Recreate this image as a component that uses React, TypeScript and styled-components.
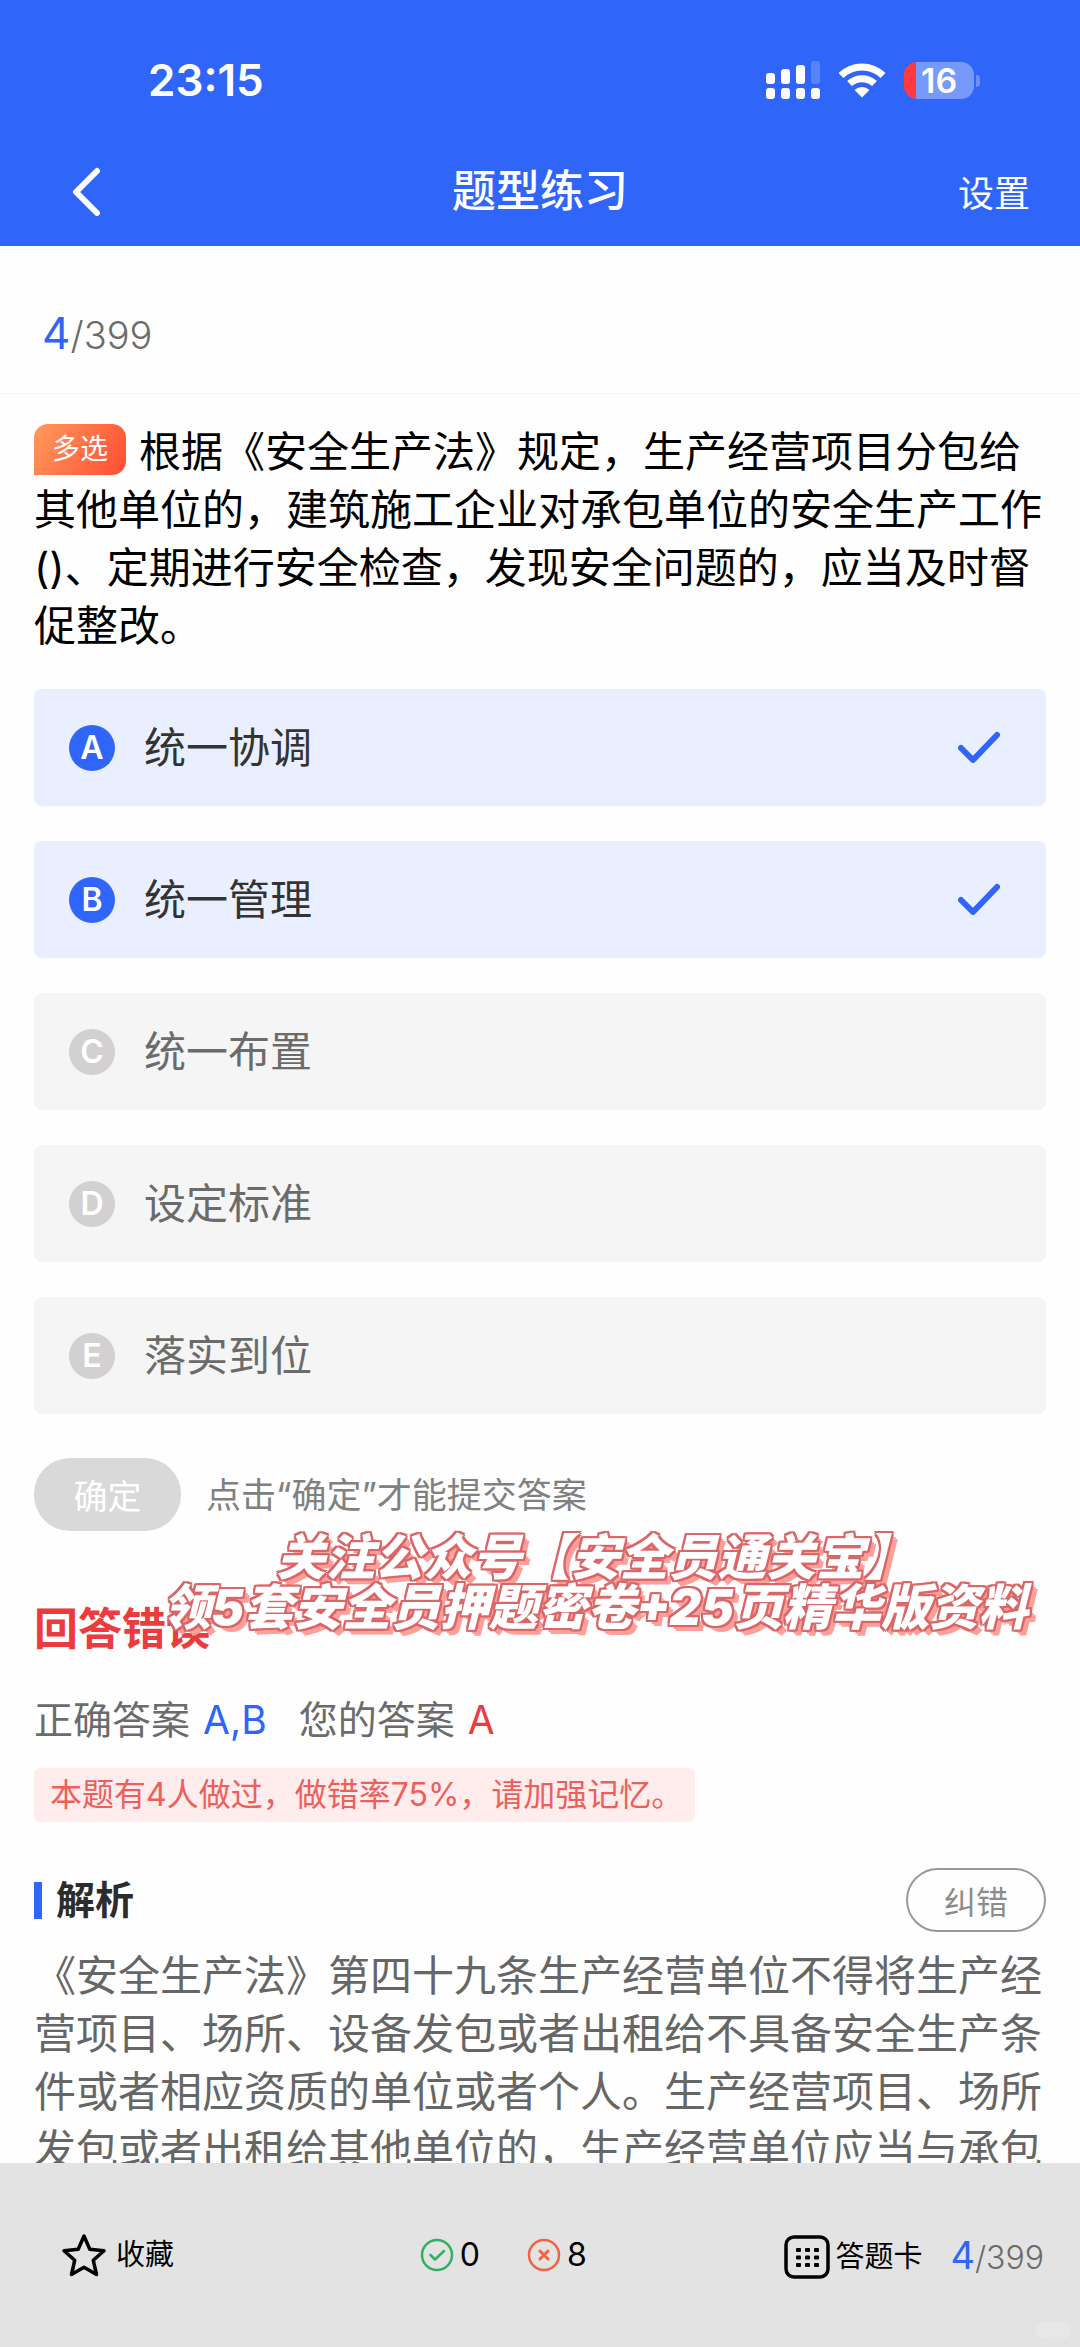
import React, { useState } from "react";
import styled, { createGlobalStyle } from "styled-components";

const BLUE = "#2f65f8";
const RED = "#ec3b3c";

const GlobalStyle = createGlobalStyle`
  *, *::before, *::after { box-sizing: border-box; }
  html, body { margin: 0; padding: 0; }
  body {
    background: #fefefe;
    color: #000;
    font-family: Inter, "Noto Sans CJK SC", sans-serif;
    font-size: 42px;
    line-height: 58px;
  }
  button { font-family: inherit; border: 0; padding: 0; margin: 0; background: none; color: inherit; cursor: pointer; }
  h1, h2, h3, p, ul { margin: 0; padding: 0; font-weight: 400; }
`;

const Page = styled.div`
  display: flex;
  flex-direction: column;
  height: 100vh;
`;

const Header = styled.header`
  flex: none;
  background: ${BLUE};
  color: #fff;
`;

const StatusBar = styled.div`
  display: flex;
  align-items: center;
  justify-content: space-between;
  height: 136px;
  padding: 24px 106px 0 148px;
`;

const Clock = styled.time`
  font-size: 44px;
  font-weight: 600;
`;

const StatusIcons = styled.div`
  display: flex;
  align-items: center;
  gap: 18px;
`;

const Battery = styled.div`
  position: relative;
  width: 70px;
  height: 37px;
  padding-left: 17px;
  border-radius: 13px;
  background: linear-gradient(90deg, #ff3b40 12px, #7699fb 12px);
  font-size: 34px;
  font-weight: 600;
  line-height: 37px;

  &::after {
    content: "";
    position: absolute;
    left: 72px;
    top: 13px;
    width: 4px;
    height: 12px;
    border-radius: 0 4px 4px 0;
    background: #6a90fa;
  }
`;

const NavBar = styled.nav`
  display: grid;
  grid-template-columns: 1fr auto 1fr;
  align-items: center;
  height: 110px;
  padding: 0 50px;
`;

const BackButton = styled.button`
  display: flex;
  justify-self: start;
  padding-left: 20px;
`;

const NavTitle = styled.h1`
  font-size: 44px;
  font-weight: 500;
`;

const NavAction = styled.button`
  justify-self: end;
  font-size: 36px;
`;

const Content = styled.main`
  flex: 1;
  min-height: 0;
  overflow-y: auto;
  scrollbar-width: none;
`;

const ProgressRow = styled.div`
  display: flex;
  align-items: center;
  height: 148px;
  padding: 28px 42px 0;
  border-bottom: 1px solid #f7f7f7;
`;

const Counter = styled.span<{ $small?: boolean }>`
  color: #6b6b6b;
  font-size: ${(p) => (p.$small ? 32 : 38)}px;
  font-weight: 300;

  b {
    color: ${BLUE};
    font-size: ${(p) => (p.$small ? 38 : 44)}px;
    font-weight: 400;
  }
`;

const Body = styled.div`
  padding: 29px 34px 0;
`;

const Question = styled.p`
  color: #000;
`;

const TypeTag = styled.span`
  display: inline-block;
  margin: 1px 13px 0 0;
  padding: 0 18px;
  border-radius: 14px 14px 14px 0;
  background: linear-gradient(120deg, #ff9b5c, #ff4c33);
  color: #fff;
  font-size: 28px;
  line-height: 51px;
  vertical-align: top;
`;

const Options = styled.ul`
  display: flex;
  flex-direction: column;
  gap: 35px;
  margin-top: 34px;
  list-style: none;
`;

const Option = styled.label<{ $on: boolean }>`
  position: relative;
  display: flex;
  align-items: center;
  gap: 29px;
  height: 117px;
  padding: 0 46px 0 35px;
  border-radius: 8px;
  background: ${(p) => (p.$on ? "#e9effe" : "#f5f5f5")};
  color: ${(p) => (p.$on ? "#333" : "#6b6b6b")};
`;

const OptionInput = styled.input`
  position: absolute;
  inset: 0;
  margin: 0;
  opacity: 0;
`;

const Letter = styled.span<{ $on: boolean }>`
  width: 46px;
  height: 46px;
  border-radius: 50%;
  background: ${(p) => (p.$on ? BLUE : "#d2d0d0")};
  color: #fff;
  font-size: 32px;
  font-weight: 600;
  line-height: 46px;
  text-align: center;
`;

const OptionText = styled.span`
  flex: 1;
`;

const SubmitRow = styled.div`
  display: flex;
  align-items: center;
  gap: 25px;
  margin-top: 44px;
  color: #808080;
  font-size: 35px;
`;

const SubmitButton = styled.button`
  width: 147px;
  height: 73px;
  border-radius: 36px;
  background: #d9d9d9;
  color: #fff;
  font-size: 34px;
`;

const Result = styled.section`
  position: relative;
  padding-top: 69px;
`;

const ResultTitle = styled.h2`
  color: ${RED};
  font-size: 44px;
  font-weight: 700;
`;

const Answers = styled.p`
  display: flex;
  gap: 32px;
  margin-top: 33px;
  color: #6b6b6b;
  font-size: 39px;
`;

const Value = styled.span<{ $color: string }>`
  margin-left: 2px;
  color: ${(p) => p.$color};
`;

const Note = styled.p`
  width: fit-content;
  margin-top: 19px;
  padding: 0 12px 0 16px;
  border-radius: 6px;
  background: #ffecec;
  color: #ee5f5b;
  font-size: 32px;
  line-height: 54px;
`;

const Promo = styled.p`
  position: absolute;
  top: 2px;
  left: 76px;
  right: -34px;
  color: #fff;
  font-size: 49px;
  font-style: italic;
  font-weight: 900;
  line-height: 50px;
  text-align: center;
  white-space: nowrap;
  text-shadow:
    2px 0 0 #da6668, -2px 0 0 #da6668, 0 2px 0 #da6668, 0 -2px 0 #da6668,
    2px 2px 0 #da6668, -2px 2px 0 #da6668, 2px -2px 0 #da6668, -2px -2px 0 #da6668,
    4px 4px 0 #ff9f9a, 6px 6px 0 #ff9f9a;
  pointer-events: none;

  span { display: block; }
`;

const AnalysisHead = styled.div`
  display: flex;
  align-items: center;
  justify-content: space-between;
  margin-top: 46px;
`;

const AnalysisTitle = styled.h3`
  display: flex;
  align-items: center;
  gap: 14px;
  color: #2c2c2c;
  font-size: 39px;
  font-weight: 700;

  &::before {
    content: "";
    width: 8px;
    height: 37px;
    background: ${BLUE};
  }
`;

const ReportButton = styled.button`
  width: 140px;
  height: 64px;
  border: 2px solid #999;
  border-radius: 32px;
  color: #8c8c8c;
  font-size: 32px;
`;

const AnalysisText = styled.p`
  margin-top: 15px;
  color: #666;
`;

const Footer = styled.footer`
  position: relative;
  display: flex;
  flex: none;
  align-items: flex-start;
  justify-content: space-between;
  height: 184px;
  padding: 63px 36px 0 60px;
  background: #e3e3e3;
  font-size: 29px;

  &::after {
    content: "";
    position: absolute;
    right: 9px;
    bottom: 8px;
    width: 35px;
    height: 17px;
    border-radius: 8px;
    background: #e7e7e7;
  }
`;

const FooterButton = styled.button<{ $gap: number }>`
  display: flex;
  align-items: center;
  gap: ${(p) => p.$gap}px;
  font-size: 29px;
  line-height: 58px;
`;

const Tally = styled.div`
  display: flex;
  gap: 47px;
  margin-left: 48px;
`;

const TallyItem = styled.span`
  display: flex;
  align-items: center;
  gap: 6px;
  font-size: 32px;
`;

const FooterEnd = styled.div`
  display: flex;
  align-items: center;
  gap: 28px;
`;

const SignalIcon = () => (
  <svg width="54" height="38" viewBox="0 0 54 38" fill="#fff" aria-hidden="true">
    <rect x="0" y="12" width="9" height="11" rx="3" />
    <rect x="15" y="8" width="9" height="15" rx="3" />
    <rect x="30" y="4" width="9" height="19" rx="3" />
    <rect x="45" y="0" width="9" height="23" rx="3" opacity="0.2" />
    <rect x="0" y="27" width="9" height="11" rx="3" />
    <rect x="15" y="27" width="9" height="11" rx="3" />
    <rect x="30" y="27" width="9" height="11" rx="3" />
    <rect x="45" y="27" width="9" height="11" rx="3" />
  </svg>
);

const WifiIcon = () => (
  <svg width="48" height="36" viewBox="0 0 48 36" aria-hidden="true">
    <g fill="none" stroke="#fff" strokeWidth="7">
      <path d="M3 13.5a30 30 0 0 1 42 0" />
      <path d="M11.500 21.500a18.500 18.500 0 0 1 25 0" />
    </g>
    <path d="M24 35.500l-7.500-7.600a11 11 0 0 1 15 0z" fill="#fff" />
  </svg>
);

const BackIcon = () => (
  <svg width="32" height="50" viewBox="0 0 32 50" fill="none" stroke="#fff" strokeWidth="6" strokeLinecap="round" strokeLinejoin="round" aria-hidden="true">
    <path d="M27 5L6 26l21 21" />
  </svg>
);

const CheckIcon = () => (
  <svg width="42" height="34" viewBox="0 0 42 34" fill="none" stroke={BLUE} strokeWidth="6" strokeLinecap="round" strokeLinejoin="round" aria-hidden="true">
    <path d="M3 17l12 12L39 4" />
  </svg>
);

const StarIcon = () => (
  <svg width="48" height="48" viewBox="0 0 48 48" fill="none" stroke="#000" strokeWidth="3.500" strokeLinejoin="round" aria-hidden="true">
    <path d="M24 5l5.800 13.200 14.200 1.500-10.700 9.600L36.500 43.500 24 36.300 11.500 43.500l3.200-14.200L4 19.700l14.200-1.500z" />
  </svg>
);

const RightIcon = () => (
  <svg width="34" height="34" viewBox="0 0 34 34" fill="none" stroke="#2fb160" strokeWidth="2.500" strokeLinecap="round" strokeLinejoin="round" aria-hidden="true">
    <circle cx="17" cy="17" r="15" />
    <path d="M10.500 17l4.500 4.500 9-8.500" />
  </svg>
);

const WrongIcon = () => (
  <svg width="34" height="34" viewBox="0 0 34 34" fill="none" stroke="#f4623f" strokeWidth="2.500" strokeLinecap="round" aria-hidden="true">
    <circle cx="17" cy="17" r="15" />
    <path d="M13 13l8 8M21 13l-8 8" strokeWidth="3" />
  </svg>
);

const CardIcon = () => (
  <svg width="46" height="44" viewBox="0 0 46 44" aria-hidden="true">
    <rect x="2" y="2" width="42" height="40" rx="8" fill="none" stroke="#000" strokeWidth="3.500" />
    {[13, 20.5, 28].map((y) =>
      [12, 21, 30].map((x) => <rect key={`${x}-${y}`} x={x} y={y} width="5" height="4" rx="1" />)
    )}
  </svg>
);

const OPTIONS = [
  { letter: "A", text: "统一协调" },
  { letter: "B", text: "统一管理" },
  { letter: "C", text: "统一布置" },
  { letter: "D", text: "设定标准" },
  { letter: "E", text: "落实到位" },
];

export default function App() {
  const [chosen, setChosen] = useState<string[]>(["A", "B"]);
  const toggle = (letter: string) =>
    setChosen((list) => (list.includes(letter) ? list.filter((l) => l !== letter) : [...list, letter]));

  return (
    <>
      <GlobalStyle />
      <Page>
        <Header>
          <StatusBar>
            <Clock>23:15</Clock>
            <StatusIcons>
              <SignalIcon />
              <WifiIcon />
              <Battery>16</Battery>
            </StatusIcons>
          </StatusBar>
          <NavBar>
            <BackButton aria-label="返回">
              <BackIcon />
            </BackButton>
            <NavTitle>题型练习</NavTitle>
            <NavAction>设置</NavAction>
          </NavBar>
        </Header>

        <Content>
          <ProgressRow>
            <Counter>
              <b>4</b>/399
            </Counter>
          </ProgressRow>

          <Body>
            <Question>
              <TypeTag>多选</TypeTag>
              根据《安全生产法》规定，生产经营项目分包给其他单位的，建筑施工企业对承包单位的安全生产工作()、定期进行安全检查，发现安全问题的，应当及时督促整改。
            </Question>

            <Options>
              {OPTIONS.map(({ letter, text }) => {
                const on = chosen.includes(letter);
                return (
                  <li key={letter}>
                    <Option $on={on}>
                      <OptionInput type="checkbox" checked={on} onChange={() => toggle(letter)} />
                      <Letter $on={on}>{letter}</Letter>
                      <OptionText>{text}</OptionText>
                      {on && <CheckIcon />}
                    </Option>
                  </li>
                );
              })}
            </Options>

            <SubmitRow>
              <SubmitButton>确定</SubmitButton>
              <span>点击“确定”才能提交答案</span>
            </SubmitRow>

            <Result>
              <ResultTitle>回答错误</ResultTitle>
              <Answers>
                <span>
                  正确答案 <Value $color={BLUE}>A,B</Value>
                </span>
                <span>
                  您的答案 <Value $color={RED}>A</Value>
                </span>
              </Answers>
              <Note>本题有4人做过，做错率75%，请加强记忆。</Note>
              <Promo>
                <span>关注公众号【安全员通关宝】</span>
                <span>领5套安全员押题密卷+25页精华版资料</span>
              </Promo>
            </Result>

            <AnalysisHead>
              <AnalysisTitle>解析</AnalysisTitle>
              <ReportButton>纠错</ReportButton>
            </AnalysisHead>
            <AnalysisText>
              《安全生产法》第四十九条生产经营单位不得将生产经营项目、场所、设备发包或者出租给不具备安全生产条件或者相应资质的单位或者个人。生产经营项目、场所发包或者出租给其他单位的，生产经营单位应当与承包
            </AnalysisText>
          </Body>
        </Content>

        <Footer>
          <FooterButton $gap={8}>
            <StarIcon />
            收藏
          </FooterButton>
          <Tally>
            <TallyItem>
              <RightIcon />0
            </TallyItem>
            <TallyItem>
              <WrongIcon />8
            </TallyItem>
          </Tally>
          <FooterEnd>
            <FooterButton $gap={5}>
              <CardIcon />
              答题卡
            </FooterButton>
            <Counter $small>
              <b>4</b>/399
            </Counter>
          </FooterEnd>
        </Footer>
      </Page>
    </>
  );
}
